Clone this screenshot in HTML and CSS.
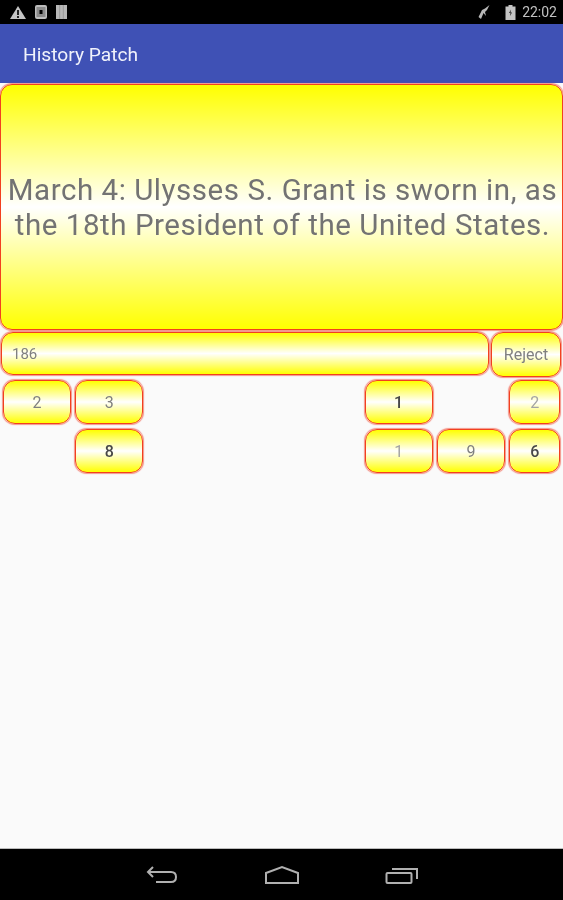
FILE: index.html
```html
<!DOCTYPE html>
<html lang="en">
<head>
<meta charset="utf-8">
<title>History Patch</title>
<link rel="stylesheet" href="styles.css">
</head>
<body>
<div class="screen">
  <div class="statusbar">
    <div class="status-left">
      <svg class="ic" width="16" height="13" viewBox="0 0 16 13"><path d="M8 0 L16 13 H0 Z" fill="#c4c4c4"/><rect x="7" y="4" width="2" height="5" fill="#222"/><rect x="7" y="10" width="2" height="2" fill="#222"/></svg>
      <svg class="ic" width="12" height="14" viewBox="0 0 12 14"><rect width="12" height="14" rx="2" fill="#bdbdbd"/><rect x="1.500" y="2" width="9" height="10" fill="#8a8a8a"/><rect x="4.500" y="5" width="3" height="4" fill="#000"/></svg>
      <svg class="ic" width="11" height="14" viewBox="0 0 11 14"><rect width="11" height="14" fill="#b8b8b8"/><path d="M3.700 0V14M7.300 0V14" stroke="#999" stroke-width="1"/></svg>
    </div>
    <div class="status-right">
      <svg class="ic" width="12" height="14" viewBox="0 0 12 14"><path d="M0.500 12 L4 5 L7 3.500 L11.500 0 L9 5 L7 7 L8 11 L5.500 8 L3 14 Z" fill="#b8b8b8"/></svg>
      <svg class="ic" width="11" height="15" viewBox="0 0 11 15"><path d="M3.500 0H7.500V1.500H10.500V15H0.500V1.500H3.500Z" fill="#c4c4c4"/><path d="M6 4.500 L4 8 H5.500 L5 11 L7 7.500 H5.500 Z" fill="#222"/></svg>
      <span class="clock">22:02</span>
    </div>
  </div>
  <div class="appbar">History Patch</div>
  <main class="content">
    <div class="card question">March 4: Ulysses S. Grant is sworn in, as the 18th President of the United States.</div>
    <div class="answer-row">
      <div class="card answer">186</div>
      <div class="card tile reject">Reject</div>
    </div>
    <div class="tiles">
      <div class="card tile">2</div>
      <div class="card tile">3</div>
      <div class="card tile dark c6">1</div>
      <div class="card tile pale c8">2</div>
      <div class="card tile dark c2 r2">8</div>
      <div class="card tile pale c6 r2">1</div>
      <div class="card tile c7 r2">9</div>
      <div class="card tile dark c8 r2">6</div>
    </div>
  </main>
  <div class="navbar">
    <svg width="32" height="20" viewBox="0 0 32 20" fill="none" stroke="#b0b0b0" stroke-width="2"><path d="M7 2 L2 7 L7 12 M2 7 H25 Q30 7 30 12 Q30 17 25 17 H10"/></svg>
    <svg width="36" height="20" viewBox="0 0 36 20" fill="none" stroke="#b0b0b0" stroke-width="2"><path d="M2 8 L18 2 L34 8 V18 H2 Z"/></svg>
    <svg width="34" height="20" viewBox="0 0 34 20" fill="none" stroke="#b0b0b0" stroke-width="2"><rect x="1.500" y="8" width="25" height="10" rx="1"/><path d="M7 4 H32 V14"/></svg>
  </div>
</div>
</body>
</html>
```
FILE: styles.css
```css
* { box-sizing: border-box; }
html, body { margin: 0; padding: 0; }
body { font-family: Roboto, "Liberation Sans", sans-serif; background: #fafafa; }
.screen { width: 563px; height: 900px; display: flex; flex-direction: column; overflow: hidden; filter: blur(0.45px); }
.statusbar { height: 24px; background: #000; display: flex; justify-content: space-between; align-items: center; padding: 0 6px 0 10px; flex: none; }
.status-left { display: flex; gap: 9px; align-items: center; }
.status-right { display: flex; gap: 6px; align-items: center; }
.status-right .ic:first-child { margin-right: 9px; }
.ic { display: block; }
.clock { color: #c0c0c0; font-size: 14px; }
.appbar { height: 59px; background: #3f51b5; color: #f0f2fb; font-size: 19.200px; display: flex; align-items: center; padding: 2px 0 0 23px; flex: none; }
.content { flex: 1; display: flex; flex-direction: column; padding: 1px 0 0 0; }
.card { border: 1px solid #f2401f; border-radius: 12px; box-shadow: 0 0 1px 0.500px rgba(240, 80, 60, 0.6); background: linear-gradient(#ffff00, #ffffff 50%, #ffff00); color: #808080; display: flex; align-items: center; justify-content: center; }
.question { width: 563px; height: 246px; font-size: 29.500px; letter-spacing: 0.540px; line-height: 35px; text-align: center; color: #737373; padding: 2px 2px 0 4px; }
.answer-row { display: flex; height: 46px; }
.answer { width: 488px; height: 43px; margin: 2px 0 0 1px; justify-content: flex-start; padding-left: 10px; font-size: 15px; }
.reject { width: 70px; height: 45px; margin: 2px 0 0 2px; font-size: 17px; }
.tiles { display: grid; grid-template-columns: repeat(7, 68px) 51px; column-gap: 4.330px; row-gap: 5px; grid-auto-rows: 44px; padding: 4px 0 0 3px; }
.tile { font-size: 16px; }
.dark { color: #484848; font-weight: 500; }
.pale { color: #a4a4a4; }
.c2 { grid-column: 2; }
.c6 { grid-column: 6; }
.c7 { grid-column: 7; }
.c8 { grid-column: 8; }
.r2 { grid-row: 2; }
.navbar { height: 52px; background: #000; border-top: 1px solid #bbb; flex: none; display: flex; justify-content: space-between; align-items: center; padding: 0 144px 0 146px; }
```
